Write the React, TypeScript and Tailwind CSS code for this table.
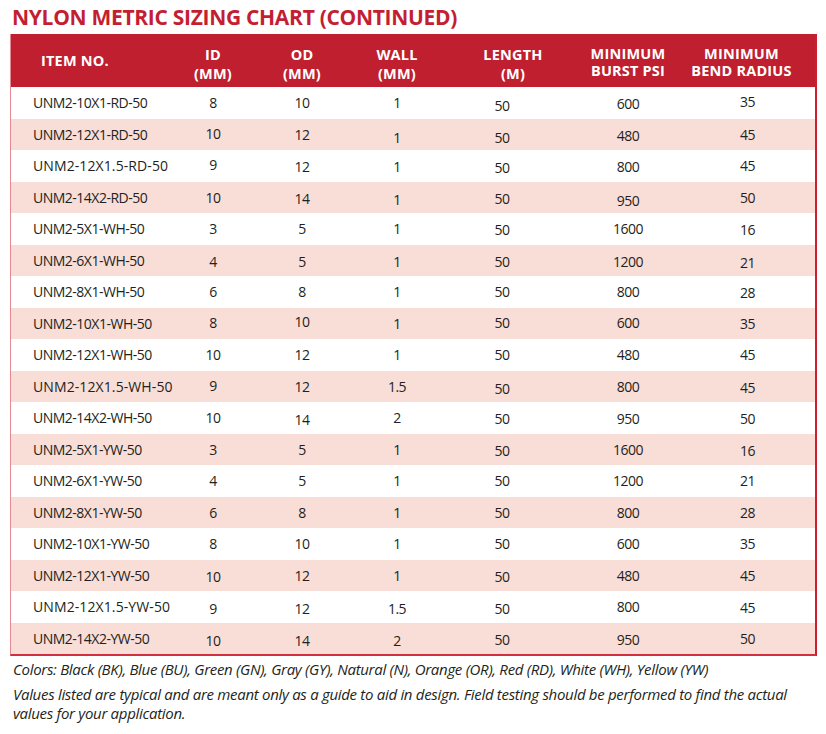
import React from "react";

type Row = { item: string; v: string[]; off?: number[]; wide?: boolean };

const rows: Row[] = [
  { item: "UNM2-10X1-RD-50", v: ["8", "10", "1", "50", "600", "35"], off: [0, 0, 0, 3, 1, -1] },
  { item: "UNM2-12X1-RD-50", v: ["10", "12", "1", "50", "480", "45"], off: [-1, 0, 3, 3, 1, 0] },
  { item: "UNM2-12X1.5-RD-50", v: ["9", "12", "1", "50", "800", "45"], off: [-1, 1, 1, 2, 1, 0], wide: true },
  { item: "UNM2-14X2-RD-50", v: ["10", "14", "1", "50", "950", "50"], off: [0, 1, 2, 1, 3, 0] },
  { item: "UNM2-5X1-WH-50", v: ["3", "5", "1", "50", "1600", "16"], off: [0, 0, 0, 1, 0, 1] },
  { item: "UNM2-6X1-WH-50", v: ["4", "5", "1", "50", "1200", "21"], off: [1, 1, 1, 1, 1, 2] },
  { item: "UNM2-8X1-WH-50", v: ["6", "8", "1", "50", "800", "28"], off: [0, 0, 0, 0, 0, 1] },
  { item: "UNM2-10X1-WH-50", v: ["8", "10", "1", "50", "600", "35"], off: [-1, -2, 0, -1, -1, 0] },
  { item: "UNM2-12X1-WH-50", v: ["10", "12", "1", "50", "480", "45"] },
  { item: "UNM2-12X1.5-WH-50", v: ["9", "12", "1.5", "50", "800", "45"], off: [-1, 0, 0, 2, 0, 1], wide: true },
  { item: "UNM2-14X2-WH-50", v: ["10", "14", "2", "50", "950", "50"], off: [0, 2, 0, 1, 1, 1] },
  { item: "UNM2-5X1-YW-50", v: ["3", "5", "1", "50", "1600", "16"], off: [0, 0, 0, 1, 0, 1] },
  { item: "UNM2-6X1-YW-50", v: ["4", "5", "1", "50", "1200", "21"] },
  { item: "UNM2-8X1-YW-50", v: ["6", "8", "1", "50", "800", "28"] },
  { item: "UNM2-10X1-YW-50", v: ["8", "10", "1", "50", "600", "35"] },
  { item: "UNM2-12X1-YW-50", v: ["10", "12", "1", "50", "480", "45"], off: [1, 0, 0, 1, 0, 0] },
  { item: "UNM2-12X1.5-YW-50", v: ["9", "12", "1.5", "50", "800", "45"], off: [2, 2, 2, 2, 0, 1], wide: true },
  { item: "UNM2-14X2-YW-50", v: ["10", "14", "2", "50", "950", "50"], off: [2, 2, 2, 1, 1, 0] },
];

const grid = "grid grid-cols-[158px_88px_90px_100px_122px_118px_131px]";
const font = { fontFamily: '"Open Sans", "Noto Sans", sans-serif' };

const dataPad = ["", "", "", "pr-[12px]", "", "pr-[10px]"];

export default function App() {
  return (
    <div className="w-[826px] h-[734px] bg-white text-[#231f20]" style={font}>
      <div className="pt-[3px] pl-[12px] text-[21px] font-bold leading-[28px] text-[#c41e32] tracking-[-0.3px] whitespace-nowrap">
        NYLON METRIC SIZING CHART (CONTINUED)
      </div>
      <div className="ml-[10px] mt-[3px] w-[807px] border-r-2 border-b-2 border-l border-l-[#e58a92] border-r-[#c8202f] border-b-[#d23040]">
        <div className={`${grid} h-[53px] bg-[#c01f2f] text-white font-bold text-[14.5px] tracking-[0.2px] items-start text-center whitespace-nowrap`}>
          <div className="text-left pl-[30px] pt-[18px] leading-[18px]">ITEM NO.</div>
          <div className="pt-[11px] leading-[19px]">ID<br />(MM)</div>
          <div className="pt-[11px] leading-[19px]">OD<br />(MM)</div>
          <div className="pt-[11px] leading-[19px]">WALL<br />(MM)</div>
          <div className="pl-[10px] pt-[11px] leading-[19px]">LENGTH<br />(M)</div>
          <div className="pt-[11px] leading-[17px]">MINIMUM<br />BURST PSI</div>
          <div className="pr-[22px] pt-[11px] leading-[17px]">MINIMUM<br />BEND RADIUS</div>
        </div>
        {rows.map((r, i) => (
          <div
            key={i}
            className={`${grid} h-[31.5px] items-center text-[14px] whitespace-nowrap ${i % 2 === 1 ? "bg-[#f9ddd7]" : "bg-white"}`}
          >
            <div className={`pl-[22px] ${r.wide ? "tracking-[0.1px]" : "tracking-[-0.5px]"}`}>{r.item}</div>
            {r.v.map((val, j) => (
              <div
                key={j}
                className={`text-center relative tracking-[-0.5px] ${dataPad[j]}`}
                style={{ top: (r.off ? r.off[j] : 0) }}
              >
                {val}
              </div>
            ))}
          </div>
        ))}
      </div>
      <div className="pl-[13px] pt-[2px] italic text-[15px] tracking-[-0.3px] leading-[19px]">
        <div className="mt-[2px] whitespace-nowrap">
          Colors: Black (BK), Blue (BU), Green (GN), Gray (GY), Natural (N), Orange (OR), Red (RD), White (WH), Yellow (YW)
        </div>
        <div className="mt-[6px] w-[790px]">
          Values listed are typical and are meant only as a guide to aid in design. Field testing should be performed to find the actual values for your application.
        </div>
      </div>
    </div>
  );
}
